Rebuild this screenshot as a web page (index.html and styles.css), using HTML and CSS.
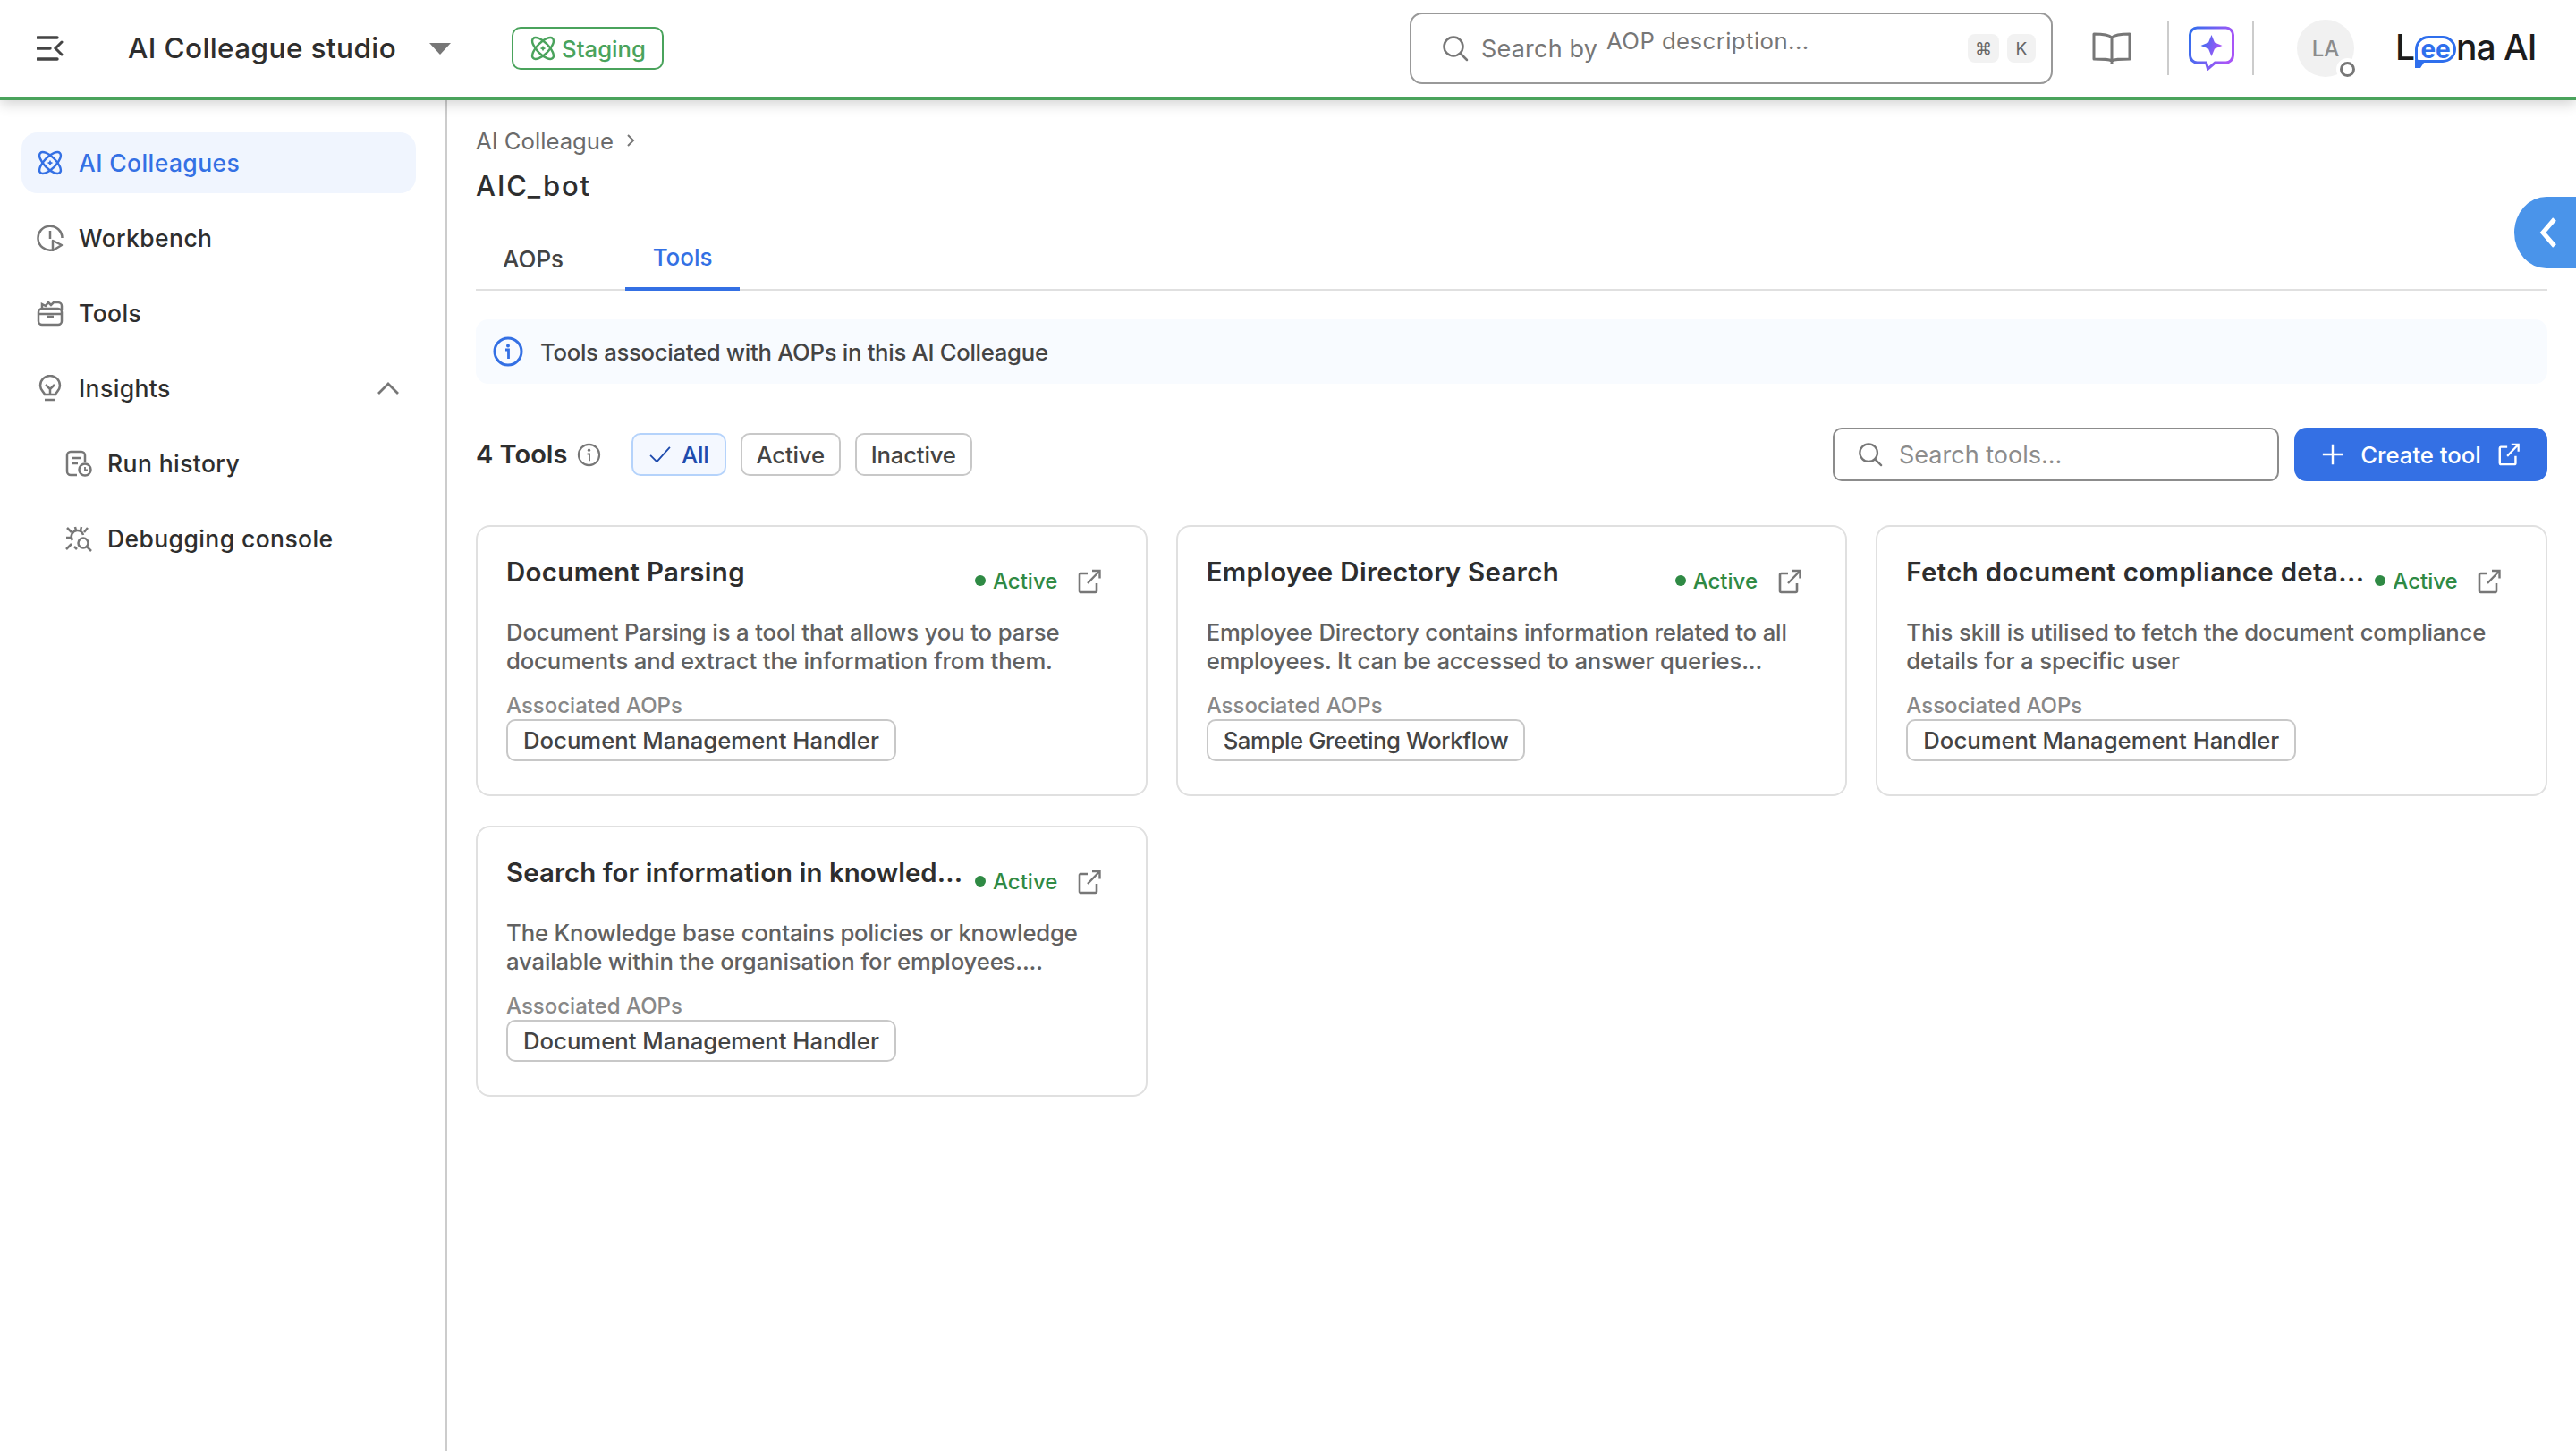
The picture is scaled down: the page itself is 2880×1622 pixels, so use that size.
FILE: index.html
```html
<!DOCTYPE html>
<html lang="en">
<head>
<meta charset="utf-8">
<title>AI Colleague studio</title>
<link rel="stylesheet" href="styles.css">
</head>
<body>
<svg class="sprite" aria-hidden="true">
  <defs>
    <linearGradient id="grad" x1="0" y1="0" x2="1" y2="0.3"><stop offset="0" stop-color="#2f6fed"/><stop offset="1" stop-color="#a855f7"/></linearGradient>
    <symbol id="atom" viewBox="0 0 32 32">
      <g fill="none" stroke="currentColor" stroke-width="2.6">
        <ellipse cx="16" cy="16" rx="7" ry="16.5" transform="rotate(-45 16 16)"/>
        <ellipse cx="16" cy="16" rx="7" ry="16.5" transform="rotate(45 16 16)"/>
      </g>
      <path d="M16 12.500l1.200 2.300 2.300 1.200-2.300 1.200-1.200 2.300-1.200-2.300-2.300-1.200 2.300-1.200z" fill="currentColor"/>
    </symbol>
    <symbol id="ext" viewBox="0 0 28 28">
      <path d="M12 5H4.500A1.500 1.500 0 0 0 3 6.500v18A1.500 1.500 0 0 0 4.500 26h16a1.500 1.500 0 0 0 1.500-1.500V16" fill="none" stroke="currentColor" stroke-width="2.600"/>
      <path d="M12 16L25 2.500M17 2h8.500v8.500" fill="none" stroke="currentColor" stroke-width="2.400"/>
    </symbol>
    <symbol id="search" viewBox="0 0 30 30">
      <circle cx="13" cy="13" r="10.500" fill="none" stroke="currentColor" stroke-width="2.500"/>
      <path d="M21 21l7 7" stroke="currentColor" stroke-width="2.500" stroke-linecap="round"/>
    </symbol>
  </defs>
</svg>

<header class="topbar">
  <svg class="menu-icon" viewBox="0 0 30 30"><path d="M1 3h22M1 15h14M1 27h22" stroke="#444" stroke-width="3.400" stroke-linecap="round" fill="none"/><path d="M28 8l-7 7 7 7" stroke="#444" stroke-width="3" stroke-linecap="round" fill="none"/></svg>
  <span class="studio">AI Colleague studio</span>
  <span class="caret"></span>
  <span class="env"><svg class="env-icon"><use href="#atom"/></svg>Staging</span>
  <div class="global-search">
    <svg class="gs-icon"><use href="#search"/></svg>
    <span class="gs-text">Search by</span>
    <span class="gs-anim">AOP description...</span>
    <span class="kbd kbd-cmd">⌘</span>
    <span class="kbd">K</span>
  </div>
  <svg class="book" viewBox="0 0 44 36"><path d="M22 6C19 3 14 2 2 2v28c12 0 17 0 20 2 3-2 8-2 20-2V2C30 2 25 3 22 6zM22 6v30" fill="none" stroke="#777" stroke-width="3" stroke-linejoin="round"/></svg>
  <span class="vsep vsep-a"></span>
  <svg class="assist" viewBox="0 0 52 50"><path d="M10 2h32a8 8 0 0 1 8 8v23a8 8 0 0 1-8 8H30l-8 7-2-7H10a8 8 0 0 1-8-8V10a8 8 0 0 1 8-8z" fill="none" stroke="url(#grad)" stroke-width="3"/><path d="M26 10l3.500 8.500L38 22l-8.500 3.500L26 34l-3.500-8.500L14 22l8.500-3.500z" fill="url(#grad)"/></svg>
  <span class="vsep vsep-b"></span>
  <span class="avatar">LA<i class="presence"></i></span>
  <span class="logo"><span>L</span><span class="logo-ee">ee</span><span>na AI</span></span>
</header>

<div class="shell">
  <nav class="sidebar">
    <a class="nav-item is-active"><svg class="nav-icon"><use href="#atom"/></svg>AI Colleagues</a>
    <a class="nav-item"><svg class="nav-icon" viewBox="0 0 30 30"><path d="M17 28.500A13.500 13.500 0 1 1 28.500 15" fill="none" stroke="currentColor" stroke-width="2.500"/><path d="M15 7v9" stroke="currentColor" stroke-width="2.500"/><path d="M18 18l10 5-10 6z" fill="none" stroke="currentColor" stroke-width="2.500" stroke-linejoin="round"/></svg>Workbench</a>
    <a class="nav-item"><svg class="nav-icon" viewBox="0 0 30 30"><rect x="2" y="10" width="26" height="18" rx="4" fill="none" stroke="currentColor" stroke-width="2.500"/><path d="M2 16h26M11 19h8" stroke="currentColor" stroke-width="2.500" fill="none"/><path d="M6 10V5l4 2 3-4 3 3 3-3h5a4 4 0 0 1 4 4v4" fill="none" stroke="currentColor" stroke-width="2.500"/></svg>Tools</a>
    <a class="nav-item"><svg class="nav-icon" viewBox="0 0 30 30"><path d="M9 22c-1-3-5-5-5-10a11 11 0 0 1 22 0c0 5-4 7-5 10z" fill="none" stroke="currentColor" stroke-width="2.500"/><path d="M10 11l5 5 5-5M15 16v6M9 28h12" stroke="currentColor" stroke-width="2.500" fill="none"/></svg>Insights<svg class="chev" viewBox="0 0 26 16"><path d="M2 14L13 3l11 11" fill="none" stroke="#777" stroke-width="2.800"/></svg></a>
    <a class="nav-item nav-sub"><svg class="nav-icon" viewBox="0 0 30 30"><path d="M13 28H6a4 4 0 0 1-4-4V6a4 4 0 0 1 4-4h12a4 4 0 0 1 4 4v8" fill="none" stroke="currentColor" stroke-width="2.500"/><path d="M7 9h11M7 15h7" stroke="currentColor" stroke-width="2.500"/><circle cx="22" cy="22" r="6.500" fill="none" stroke="currentColor" stroke-width="2.500"/><path d="M22 19v3.500h3" stroke="currentColor" stroke-width="1.800" fill="none"/></svg>Run history</a>
    <a class="nav-item nav-sub"><svg class="nav-icon" viewBox="0 0 30 30"><path d="M8 17a7 7 0 0 1 5-11 7 7 0 0 1 7 5M2 3l5 5M25 3l-4 5M1 14h6M1 27l6-6M11 2l1 4M18 2l-1 4M13 27l-3-3" fill="none" stroke="currentColor" stroke-width="2.500"/><circle cx="20" cy="20" r="5.500" fill="none" stroke="currentColor" stroke-width="2.500"/><path d="M24 24l5 5" stroke="currentColor" stroke-width="2.500"/></svg>Debugging console</a>
  </nav>

  <main class="main">
    <div class="crumbs">AI Colleague <svg class="crumb-chev" viewBox="0 0 10 16"><path d="M2 2l6 6-6 6" fill="none" stroke="#777" stroke-width="2"/></svg></div>
    <h1 class="page-title">AIC_bot</h1>
    <div class="tabs">
      <a class="tab">AOPs</a>
      <a class="tab is-active">Tools</a>
    </div>
    <div class="banner">
      <svg class="banner-icon" viewBox="0 0 34 34"><circle cx="17" cy="17" r="15" fill="none" stroke="#3470e4" stroke-width="3"/><circle cx="17" cy="10.500" r="2" fill="#3470e4"/><path d="M14 15h3.500v10" fill="none" stroke="#3470e4" stroke-width="2.800"/></svg>
      Tools associated with AOPs in this AI Colleague
    </div>
    <div class="toolbar">
      <span class="count">4 Tools</span>
      <svg class="count-info" viewBox="0 0 28 28"><circle cx="14" cy="14" r="12" fill="none" stroke="#777" stroke-width="2.200"/><circle cx="14" cy="8.500" r="1.700" fill="#777"/><path d="M12 13h2.500v8" fill="none" stroke="#777" stroke-width="2"/></svg>
      <span class="chip chip-on"><svg class="check" viewBox="0 0 28 22"><path d="M2 12l8 8L26 2" fill="none" stroke="#1e4bad" stroke-width="2"/></svg>All</span>
      <span class="chip">Active</span>
      <span class="chip">Inactive</span>
      <div class="tool-search"><svg class="ts-icon"><use href="#search"/></svg>Search tools...</div>
      <button class="create"><svg class="plus" viewBox="0 0 28 28"><path d="M14 2v24M2 14h24" stroke="#fff" stroke-width="2.600"/></svg>Create tool<svg class="create-ext"><use href="#ext"/></svg></button>
    </div>
    <section class="cards">
      <article class="card">
        <div class="card-head">
          <h2 class="card-title">Document Parsing</h2>
          <span class="status"><i class="dot"></i>Active</span>
          <svg class="card-ext"><use href="#ext"/></svg>
        </div>
        <p class="desc">Document Parsing is a tool that allows you to parse documents and extract the information from them.</p>
        <div class="assoc">Associated AOPs</div>
        <span class="aop">Document Management Handler</span>
      </article>
      <article class="card">
        <div class="card-head">
          <h2 class="card-title">Employee Directory Search</h2>
          <span class="status"><i class="dot"></i>Active</span>
          <svg class="card-ext"><use href="#ext"/></svg>
        </div>
        <p class="desc">Employee Directory contains information related to all employees. It can be accessed to answer queries...</p>
        <div class="assoc">Associated AOPs</div>
        <span class="aop aop-tight">Sample Greeting Workflow</span>
      </article>
      <article class="card">
        <div class="card-head">
          <h2 class="card-title">Fetch document compliance deta...</h2>
          <span class="status"><i class="dot"></i>Active</span>
          <svg class="card-ext"><use href="#ext"/></svg>
        </div>
        <p class="desc">This skill is utilised to fetch the document compliance details for a specific user</p>
        <div class="assoc">Associated AOPs</div>
        <span class="aop">Document Management Handler</span>
      </article>
      <article class="card">
        <div class="card-head">
          <h2 class="card-title card-title-tight">Search for information in knowled...</h2>
          <span class="status"><i class="dot"></i>Active</span>
          <svg class="card-ext"><use href="#ext"/></svg>
        </div>
        <p class="desc">The Knowledge base contains policies or knowledge available within the organisation for employees....</p>
        <div class="assoc">Associated AOPs</div>
        <span class="aop">Document Management Handler</span>
      </article>
    </section>
  </main>
</div>
<div class="collapse-tab"><svg class="collapse-chev" viewBox="0 0 22 36"><path d="M18 3L5 18l13 15" fill="none" stroke="#fff" stroke-width="5"/></svg></div>
</body>
</html>
```
FILE: styles.css
```css
* { box-sizing: border-box; }
html, body { margin: 0; padding: 0; height: 100%; }
body {
  width: 2880px;
  height: 1622px;
  overflow: hidden;
  position: relative;
  background: #fff;
  color: #2e2e2e;
  font-family: Inter, "Noto Sans", sans-serif;
  font-size: 25.7px;
}
.sprite { position: absolute; width: 0; height: 0; }

.topbar {
  height: 112px;
  border-bottom: 4px solid #4aa35c;
  box-shadow: 0 4px 14px rgba(0,0,0,.18);
  display: flex;
  align-items: center;
  padding-left: 41px;
  position: relative;
  z-index: 2;
  background: #fff;
}
.menu-icon { width: 30px; height: 30px; flex: none; }
.studio { margin-left: 72px; font-size: 31.5px; font-weight: 500; letter-spacing: .4px; width: 299px; white-space: nowrap; margin-top: -2px; }
.caret { margin-left: 38px; width: 0; height: 0; border-left: 12px solid transparent; border-right: 12px solid transparent; border-top: 13px solid #777; }
.env {
  margin-left: 68px; width: 170px; height: 48px; border: 2px solid #4aa35c; border-radius: 10px;
  display: flex; align-items: center; justify-content: center; gap: 6px; color: #4aa35c; font-size: 25.7px; font-weight: 500;
}
.env-icon { width: 30px; height: 30px; }

.global-search {
  margin-left: 834px; width: 719px; height: 80px; border: 2px solid #999; border-radius: 14px;
  display: flex; align-items: center; padding-left: 34px; color: #777; font-size: 27px; flex: none;
}
.gs-icon { width: 30px; height: 30px; flex: none; margin-right: 14px; color: #777; }
.gs-text { width: 140px; white-space: nowrap; letter-spacing: .2px; }
.gs-anim { margin-top: -17px; font-size: 25.7px; letter-spacing: .45px; width: 404px; white-space: nowrap; }
.kbd { width: 32px; height: 32px; background: #f2f2f2; border-radius: 8px; display: flex; align-items: center; justify-content: center; font-size: 19px; color: #666; flex: none; }
.kbd-cmd { width: 35px; margin-right: 9px; }

.book { margin-left: 44px; width: 44px; height: 36px; flex: none; }
.vsep { width: 2px; height: 60px; background: #ccc; flex: none; }
.vsep-a { margin-left: 40px; }
.assist { margin-left: 21px; width: 53px; height: 50px; flex: none; }
.vsep-b { margin-left: 19px; }
.avatar {
  margin-left: 48px; width: 64px; height: 64px; border-radius: 50%; background: #f1f1f1; color: #8c8c8c;
  display: flex; align-items: center; justify-content: center; font-size: 24px; font-weight: 500; position: relative; flex: none;
}
.presence { position: absolute; right: -1px; bottom: 0; width: 17px; height: 17px; border: 3px solid #777; border-radius: 50%; background: #fff; box-shadow: 0 0 0 4px #fff; }
.logo { margin-left: 46px; margin-top: -4px; display: flex; align-items: center; font-size: 39px; font-weight: 500; color: #1c1c1c; white-space: nowrap; letter-spacing: -1px; flex: none; }
.logo-ee {
  position: relative; color: #2f6fed; border: 3px solid #2f6fed; border-radius: 15px 15px 15px 4px;
  font-size: 28px; line-height: 24px; height: 30px; width: 46px; text-align: center; margin: 5px 0 0 1px; background: #fff; font-weight: 700; letter-spacing: 0;
}
.logo-ee::after {
  content: ""; position: absolute; left: -3px; bottom: -9px; width: 0; height: 0;
  border-left: 6px solid #2f6fed; border-right: 6px solid transparent; border-top: 9px solid #2f6fed;
}

.shell { display: grid; grid-template-columns: 500px 1fr; height: 1510px; }
.sidebar { border-right: 2px solid #ccc; padding: 36px 33px 0 24px; display: flex; flex-direction: column; gap: 16px; }
.nav-item { height: 68px; display: flex; align-items: center; padding-left: 17px; gap: 17px; color: #2e2e2e; border-radius: 18px; font-weight: 500; font-size: 26.5px; letter-spacing: .4px; }
.nav-item.is-active { background: #f0f5fe; color: #3470e4; }
.nav-icon { width: 30px; height: 30px; color: #777; flex: none; }
.is-active .nav-icon { color: #3470e4; }
.nav-sub { padding-left: 49px; }
.chev { width: 26px; height: 16px; margin-left: auto; margin-right: 18px; }

.main { padding: 0 32px 0 32px; display: flex; flex-direction: column; min-width: 0; }
.crumbs { margin-top: 27px; height: 36px; display: flex; align-items: center; gap: 14px; color: #6b6b6b; font-size: 25.7px; }
.crumb-chev { width: 10px; height: 16px; }
.page-title { margin: 13px 0 0; font-size: 31px; line-height: 40px; font-weight: 500; color: #2e2e2e; letter-spacing: 1.9px; }
.tabs { margin-top: 32px; height: 65px; border-bottom: 2px solid #e0e0e0; display: flex; }
.tab { height: 65px; padding: 0 30px 7px; display: flex; align-items: center; font-weight: 500; font-size: 26px; color: #444; }
.tab.is-active { margin-left: 39px; width: 128px; padding: 0 0 7px; justify-content: center; color: #3470e4; border-bottom: 4px solid #3470e4; }

.banner { margin-top: 32px; height: 72px; border-radius: 14px; background: #f8fbff; display: flex; align-items: center; padding-left: 19px; gap: 19px; font-size: 25.7px; font-weight: 500; color: #444; letter-spacing: -.3px; }
.banner-icon { width: 34px; height: 34px; flex: none; }

.toolbar { margin-top: 49px; height: 60px; display: flex; align-items: center; }
.count { font-size: 29px; font-weight: 600; white-space: nowrap; width: 102px; margin-top: -2px; }
.count-info { width: 27px; height: 27px; margin-left: 11px; margin-right: 34px; flex: none; }
.chip { height: 48px; padding: 0 16px; border: 2px solid #c8c8c8; border-radius: 10px; display: flex; align-items: center; font-size: 25.7px; font-weight: 500; color: #444; margin-right: 16px; white-space: nowrap; letter-spacing: -.2px; }
.chip-on { background: #f4f8ff; border-color: #b5d3fb; color: #1e4bad; gap: 11px; padding: 0 17px; }
.check { width: 26px; height: 20px; }
.tool-search {
  margin-left: auto; width: 499px; height: 60px; border: 2px solid #8c8c8c; border-radius: 10px;
  display: flex; align-items: center; padding-left: 26px; gap: 18px; color: #8c8c8c; font-size: 27px;
}
.ts-icon { width: 28px; height: 28px; color: #777; flex: none; }
.create {
  margin-left: 17px; width: 283px; height: 60px; border: 0; border-radius: 14px; background: #3470e4; color: #fff;
  display: flex; align-items: center; justify-content: center; font: 500 25.7px Inter, sans-serif; gap: 18px;
}
.plus { width: 26px; height: 26px; }
.create-ext { width: 26px; height: 26px; color: #fff; }

.cards { margin-top: 49px; display: grid; grid-template-columns: repeat(3, 1fr); gap: 33px 32px; align-items: start; }
.card { border: 2px solid #e0e0e0; border-radius: 16px; padding: 32px 32px 35px; height: 303px; }
.card-head { display: flex; align-items: flex-start; }
.card-title { margin: 0; width: 524px; flex: none; font-size: 29.4px; line-height: 38px; font-weight: 600; letter-spacing: .35px; color: #2e2e2e; white-space: nowrap; overflow: hidden; }
.card-title-tight { letter-spacing: .08px; }
.status { margin-top: 11px; height: 34px; width: 114px; display: flex; align-items: center; gap: 8px; color: #2f8a44; font-size: 24px; font-weight: 500; flex: none; }
.dot { width: 12px; height: 12px; border-radius: 50%; background: #2f8a44; flex: none; }
.card-ext { margin-top: 15px; width: 28px; height: 28px; color: #777; flex: none; }
.desc { margin: 25px 0 0; font-size: 25.7px; line-height: 32px; color: #616161; font-weight: 500; width: 680px; letter-spacing: -.14px; }
.assoc { margin-top: 19px; font-size: 24px; line-height: 30px; color: #888; font-weight: 500; }
.aop { display: inline-flex; align-items: center; height: 47px; padding: 0 17px; border: 2px solid #c8c8c8; border-radius: 10px; font-size: 25.7px; font-weight: 500; color: #444; white-space: nowrap; }
.aop-tight { letter-spacing: -.38px; }

.collapse-tab {
  position: absolute; right: 0; top: 220px; width: 69px; height: 80px; background: #4a94ea;
  border-radius: 36px 0 0 36px / 40px 0 0 40px; display: flex; align-items: center; padding-left: 27px; z-index: 3;
}
.collapse-chev { width: 22px; height: 36px; }
```
